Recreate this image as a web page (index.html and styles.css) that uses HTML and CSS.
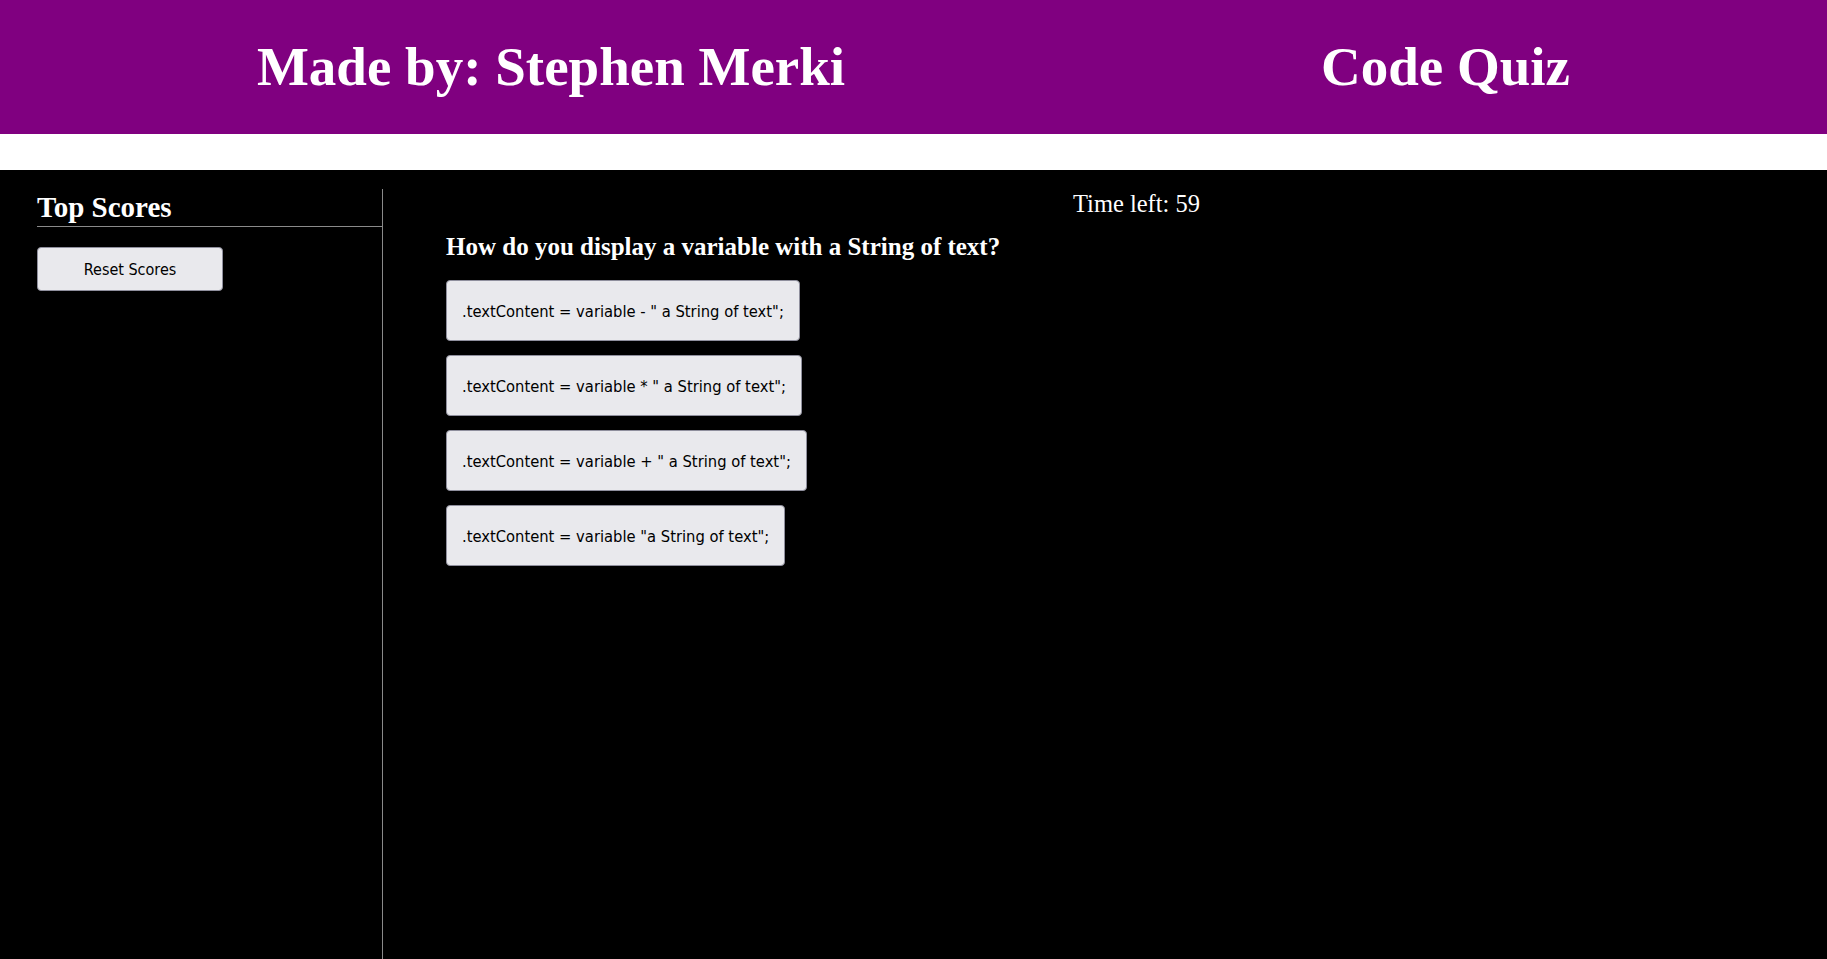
FILE: index.html
```html
<!DOCTYPE html>
<html lang="en">
<head>
<meta charset="utf-8">
<title>Code Quiz</title>
<link rel="stylesheet" href="styles.css">
</head>
<body>
<header class="top-bar">
  <h1 class="top-title">Made by: Stephen Merki</h1>
  <h1 class="top-title">Code Quiz</h1>
</header>
<main class="page">
  <aside class="sidebar">
    <h2 class="sidebar-title">Top Scores</h2>
    <button class="reset-btn">Reset Scores</button>
  </aside>
  <section class="quiz">
    <div class="timer">Time left: 59</div>
    <h3 class="question">How do you display a variable with a String of text?</h3>
    <div class="answers">
      <button class="answer">.textContent = variable - " a String of text";</button>
      <button class="answer">.textContent = variable * " a String of text";</button>
      <button class="answer">.textContent = variable + " a String of text";</button>
      <button class="answer">.textContent = variable "a String of text";</button>
    </div>
  </section>
</main>
</body>
</html>
```
FILE: styles.css
```css
html, body {
  margin: 0;
  padding: 0;
  height: 100%;
}
body {
  background: #ffffff;
  font-family: "Liberation Serif", "Times New Roman", serif;
  color: #ffffff;
  display: flex;
  flex-direction: column;
}
.top-bar {
  background: #800080;
  height: 134px;
  box-sizing: border-box;
  padding: 35px 19px 0;
  display: flex;
  justify-content: space-around;
  align-items: flex-start;
  flex-shrink: 0;
}
.top-title {
  margin: 0;
  font-size: 55px;
  line-height: 63px;
  font-weight: bold;
  color: #ffffff;
}
.page {
  margin-top: 36px;
  background: #000000;
  flex: 1;
  display: flex;
  align-items: stretch;
}
.sidebar {
  margin-top: 19px;
  width: 345px;
  padding-left: 37px;
  border-right: 1px solid #8a8a8a;
  flex-shrink: 0;
}
.sidebar-title {
  margin: 0;
  font-size: 29px;
  line-height: 32px;
  font-weight: bold;
  padding-top: 2px;
  padding-bottom: 3px;
  border-bottom: 1px solid #8a8a8a;
}
.reset-btn {
  display: block;
  margin-top: 20px;
  width: 186px;
  height: 44px;
  padding: 0;
  background: #e9e9ed;
  border: 1px solid #8f8f9d;
  border-radius: 4px;
  font-family: "DejaVu Sans Condensed", "DejaVu Sans", sans-serif;
  font-stretch: condensed;
  font-size: 16px;
  color: #000000;
}
.quiz {
  flex: 1;
  padding-top: 20px;
  padding-left: 63px;
}
.timer {
  text-align: center;
  font-size: 24.5px;
  line-height: 28px;
}
.question {
  margin: 14px 0 0;
  font-size: 25px;
  line-height: 29px;
  font-weight: bold;
}
.answers {
  margin-top: 19px;
  display: flex;
  flex-direction: column;
  align-items: flex-start;
  gap: 14px;
}
.answer {
  height: 61px;
  padding: 1px 15px 0;
  background: #e9e9ed;
  border: 1px solid #8f8f9d;
  border-radius: 4px;
  font-family: "DejaVu Sans Condensed", "DejaVu Sans", sans-serif;
  font-stretch: condensed;
  font-size: 16.4px;
  color: #000000;
}
```
